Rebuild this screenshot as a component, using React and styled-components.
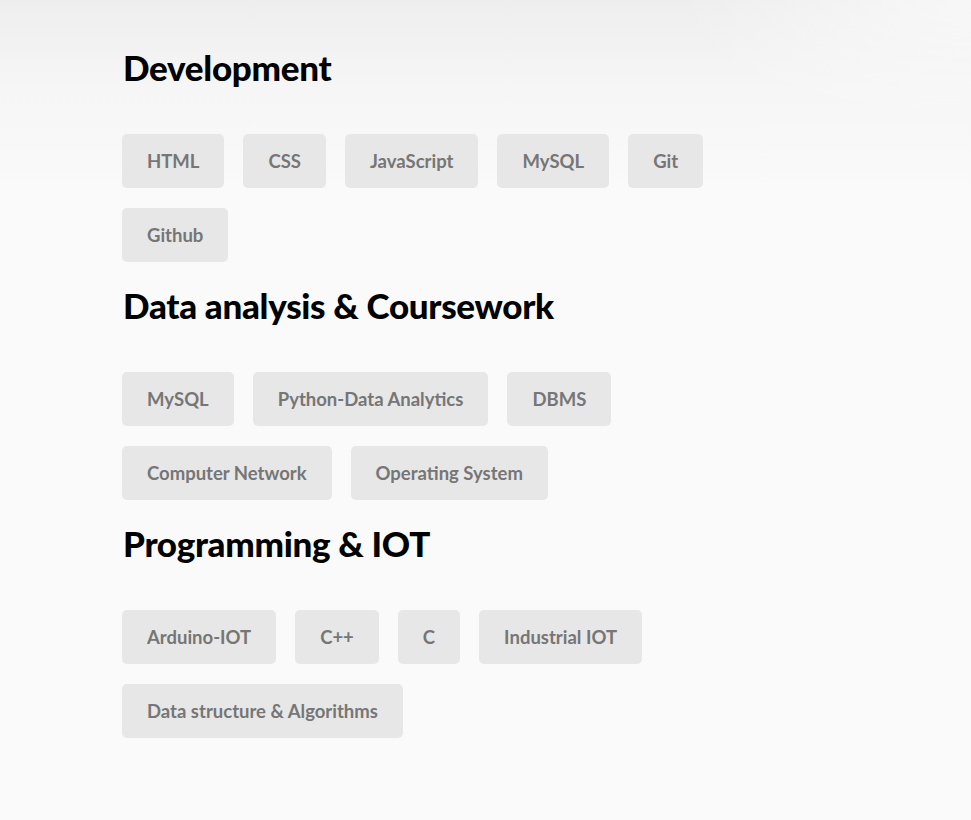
import React from 'react'
import styled, { createGlobalStyle } from 'styled-components'

const GlobalStyle = createGlobalStyle`
	html, body {
		margin: 0;
		padding: 0;
	}
	body {
		font-family: Lato, 'Noto Sans', sans-serif;
		background: #fafafa;
	}
`

const Page = styled.div`
	min-height: 820px;
	box-sizing: border-box;
	padding: 48px 0 40px 122px;
	background:
		radial-gradient(ellipse 420px 180px at 100% 0%, rgba(255, 255, 255, 0.55), rgba(255, 255, 255, 0) 70%),
		linear-gradient(to bottom, #eeeeee 0px, #f6f6f6 90px, #fafafa 190px, #fafafa 100%);
	display: flex;
	flex-direction: column;
	gap: 24px;
`

const Section = styled.section`
	display: flex;
	flex-direction: column;
`

const Heading = styled.h2`
	margin: 0 0 48px 1px;
	font-size: 35px;
	line-height: 38px;
	font-weight: 900;
	color: #000;
	letter-spacing: -0.3px;
`

const TagList = styled.ul`
	list-style: none;
	margin: 0;
	padding: 0;
	width: 640px;
	display: flex;
	flex-wrap: wrap;
	gap: 20px 19px;
`

const Tag = styled.li`
	height: 54px;
	padding: 0 25px;
	display: flex;
	align-items: center;
	background: #e7e7e7;
	border-radius: 5px;
	color: #767676;
	font-size: 18.5px;
	font-weight: 700;
`

const skills = [
	{
		title: 'Development',
		items: ['HTML', 'CSS', 'JavaScript', 'MySQL', 'Git', 'Github'],
	},
	{
		title: 'Data analysis & Coursework',
		items: ['MySQL', 'Python-Data Analytics', 'DBMS', 'Computer Network', 'Operating System'],
	},
	{
		title: 'Programming & IOT',
		items: ['Arduino-IOT', 'C++', 'C', 'Industrial IOT', 'Data structure & Algorithms'],
	},
]

const App = () => {
	return (
		<>
			<GlobalStyle />
			<Page>
				{skills.map((group) => (
					<Section key={group.title}>
						<Heading>{group.title}</Heading>
						<TagList>
							{group.items.map((item) => (
								<Tag key={item}>{item}</Tag>
							))}
						</TagList>
					</Section>
				))}
			</Page>
		</>
	)
}

export default App
